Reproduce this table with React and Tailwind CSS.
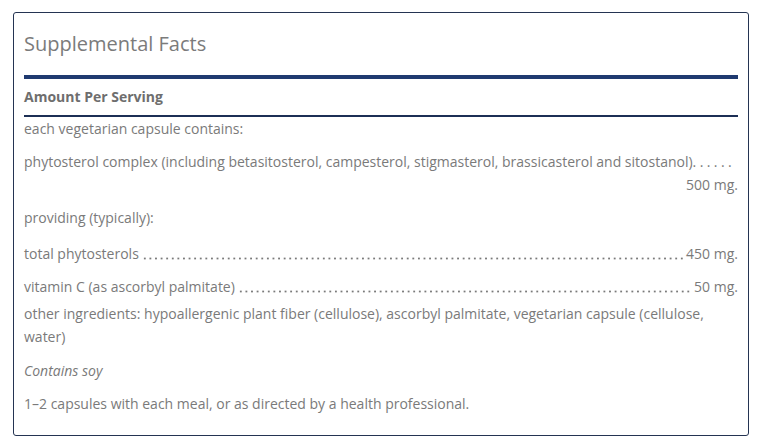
function LeaderRow({ label, amount, className = "" }) {
  return (
    <div className={`flex leading-[23px] ${className}`}>
      <span className="whitespace-nowrap">{label}</span>
      <span className="mx-[2px] flex-1 bg-[radial-gradient(circle,#7a7a7a_0.85px,transparent_1.25px)] bg-[length:5.6px_3px] bg-[position:1px_15px] bg-repeat-x" />
      <span className="whitespace-nowrap">{amount}</span>
    </div>
  );
}

export default function App() {
  return (
    <div className="h-[444px] w-[761px] bg-white pl-[13px] pt-[12px] font-['Open_Sans',sans-serif] text-[14px] text-[#7a7a7a]">
      <div className="h-[424px] w-[736px] rounded-[3px] border border-[#243452] px-[10px] pt-[17px]">
        <h2 className="text-[20px] leading-[28px] text-[#7b7b7b]">Supplemental Facts</h2>
        <div className="mt-[17px] h-[4px] bg-[#1f3a70]" />
        <div className="py-[6px] font-bold leading-[24px] text-[#6e6e6e]">Amount Per Serving</div>
        <div className="h-[2px] bg-[#1c2f55]" />

        <p className="leading-[23px]">each vegetarian capsule contains:</p>

        <div className="mt-[10px] leading-[23px]">
          <p className="whitespace-nowrap">
            phytosterol complex (including betasitosterol, campesterol, stigmasterol, brassicasterol and sitostanol)
            <span className="tracking-[3.4px]">......</span>
          </p>
          <p className="text-right">500 mg.</p>
        </div>

        <p className="mt-[10px] leading-[23px]">providing (typically):</p>

        <LeaderRow className="mt-[13px]" label="total phytosterols" amount="450 mg." />
        <LeaderRow className="mt-[10px]" label="vitamin C (as ascorbyl palmitate)" amount="50 mg." />

        <p className="mt-[4px] leading-[23px]">
          other ingredients: hypoallergenic plant fiber (cellulose), ascorbyl palmitate, vegetarian capsule (cellulose,
          <br />
          water)
        </p>

        <p className="mt-[11px] italic leading-[23px]">Contains soy</p>

        <p className="mt-[10px] leading-[23px]">1–2 capsules with each meal, or as directed by a health professional.</p>
      </div>
    </div>
  );
}
